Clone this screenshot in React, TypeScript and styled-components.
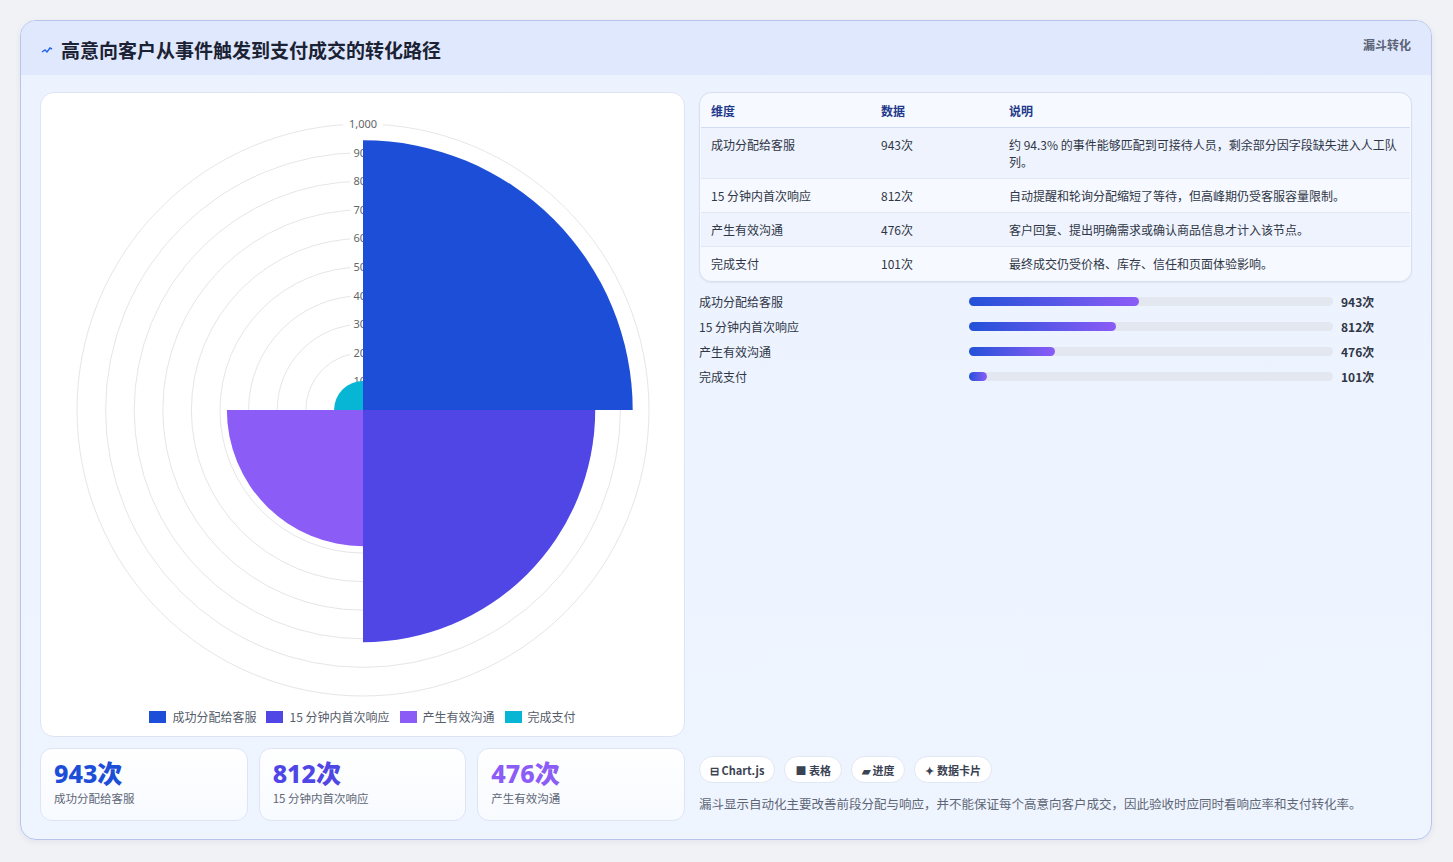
import React from "react";
import styled, { createGlobalStyle } from "styled-components";

const G = createGlobalStyle`
  html,body{margin:0;padding:0;background:#f1f2f5;}
  body{font-family:"Noto Sans CJK SC","Noto Sans",sans-serif;}
`;
const Page = styled.div`padding:20px 21px 22px 20px;`;
const Card = styled.div`
  height:820px;box-sizing:border-box;border:1px solid #b9c5ee;border-radius:16px;overflow:hidden;
  background:linear-gradient(180deg,#ecf2fe,#eef4ff 60%,#eff5ff);display:flex;flex-direction:column;
  box-shadow:0 2px 6px rgba(60,80,160,.08);
`;
const Header = styled.div`
  height:55px;background:#dfe8fd;display:flex;justify-content:space-between;align-items:flex-start;padding:0 20px 0 20px;
`;
const Title = styled.h1`margin:15px 0 0;font-size:19px;font-weight:700;color:#1b2233;display:flex;align-items:center;gap:8px;`;
const Tag = styled.span`margin-top:15px;font-size:12px;font-weight:700;color:#5b6478;`;
const Body = styled.div`flex:1;display:grid;grid-template-columns:645px 1fr;gap:14px;padding:17px 19px 18px 19px;`;
const Left = styled.div`display:flex;flex-direction:column;gap:11px;`;
const ChartBox = styled.div`height:645px;background:#fff;border:1px solid #dde5f5;border-radius:14px;display:flex;flex-direction:column;align-items:center;box-sizing:border-box;`;
const Legend = styled.div`display:flex;gap:10px;font-size:12px;color:#555c6a;margin-top:3px;`;
const LItem = styled.span`display:flex;align-items:center;gap:6px;`;
const Sw = styled.span<{c:string}>`width:17px;height:12px;background:${p=>p.c};`;
const Stats = styled.div`display:grid;grid-template-columns:repeat(3,1fr);gap:11px;`;
const Stat = styled.div`height:73px;box-sizing:border-box;background:linear-gradient(180deg,#fff,#f7faff);border:1px solid #dde5f5;border-radius:12px;padding:9px 13px;`;
const Big = styled.div<{c:string}>`font-family:"Noto Sans","Noto Sans CJK SC",sans-serif;font-size:25px;font-weight:800;color:${p=>p.c};line-height:30px;`;
const Sub = styled.div`font-size:11.5px;color:#5e6676;margin-top:2px;`;
const Right = styled.div`display:flex;flex-direction:column;`;
const Table = styled.table`width:100%;border-collapse:collapse;background:#f6f9ff;border:1px solid #d9e1f2;border-radius:12px;overflow:hidden;border-spacing:0;font-size:12px;color:#2f3646;
  th{font-weight:700;color:#1f3a8a;text-align:left;padding:8px 10px;height:17px;border-bottom:1px solid #d3dbee;}
  td{padding:8px 10px;border-top:1px solid #e1e7f3;vertical-align:top;line-height:17px;}
  tr:nth-child(odd) td{background:#eef3fd;}
`;
const TWrap = styled.div`border:1px solid #d6def0;border-radius:12px;overflow:hidden;box-shadow:0 1px 2px rgba(0,0,0,.05);`;
const Bars = styled.div`display:flex;flex-direction:column;gap:8px;margin-top:11px;`;
const BarRow = styled.div`display:grid;grid-template-columns:270px 372px 1fr;gap:0 0;align-items:center;font-size:12px;color:#2f3646;height:17px;`;
const Track = styled.div`height:9px;border-radius:5px;background:#e2e7f0;margin-right:8px;`;
const Fill = styled.div`height:100%;border-radius:5px;background:linear-gradient(90deg,#2351d8,#8b5cf6);`;
const Val = styled.b`padding-left:0;font-weight:700;`;
const Spacer = styled.div`flex:1;`;
const Chips = styled.div`display:flex;gap:9px;`;
const Chip = styled.span`height:27px;box-sizing:border-box;padding:0 10px;border:1px solid #e1e7f3;border-radius:14px;background:#fff;font-size:11px;font-weight:700;color:#3a4253;display:flex;align-items:center;gap:3px;`;
const Foot = styled.p`margin:11px 0 8px;font-size:12.5px;color:#5e6676;`;

const data=[
 {n:"成功分配给客服",v:943,c:"#1d4ed8",d:"约 94.3% 的事件能够匹配到可接待人员，剩余部分因字段缺失进入人工队列。"},
 {n:"15 分钟内首次响应",v:812,c:"#4f46e5",d:"自动提醒和轮询分配缩短了等待，但高峰期仍受客服容量限制。"},
 {n:"产生有效沟通",v:476,c:"#8b5cf6",d:"客户回复、提出明确需求或确认商品信息才计入该节点。"},
 {n:"完成支付",v:101,c:"#06b6d4",d:"最终成交仍受价格、库存、信任和页面体验影响。"},
];

function Polar(){
  const cx=322,cy=305,R=286;
  const arc=(r:number,a0:number,a1:number)=>{
    const p=(a:number)=>[cx+r*Math.sin(a),cy-r*Math.cos(a)];
    const [x0,y0]=p(a0),[x1,y1]=p(a1);
    return `M${cx} ${cy}L${x0} ${y0}A${r} ${r} 0 0 1 ${x1} ${y1}Z`;
  };
  return <svg width="643" height="600" viewBox="0 0 643 600">
    {Array.from({length:10},(_,i)=><circle key={i} cx={cx} cy={cy} r={R*(i+1)/10} fill="none" stroke="#e6e6e6"/>)}
    {Array.from({length:10},(_,i)=>{const v=(i+1)*100;const y=cy-R*(i+1)/10;const t=v===1000?"1,000":String(v);
      return <g key={i}><rect x={cx-(t.length*3.6)-2} y={y-7} width={t.length*7.2+4} height={13} fill="#fff"/><text x={cx} y={y+4} textAnchor="middle" fontSize="11" fill="#666" fontFamily="Noto Sans">{t}</text></g>})}
    {data.map((d,i)=><path key={i} d={arc(R*d.v/1000,i*Math.PI/2,(i+1)*Math.PI/2)} fill={d.c}/>)}
  </svg>;
}

export default function App(){
  return <Page><G/><Card>
    <Header><Title><svg width="12" height="10" viewBox="0 0 12 10"><path d="M1 7l3-2 2 2 3-4 2 1" fill="none" stroke="#2563eb" strokeWidth="1.4"/></svg>高意向客户从事件触发到支付成交的转化路径</Title><Tag>漏斗转化</Tag></Header>
    <Body>
      <Left>
        <ChartBox><div style={{height:12}}/><Polar/><Legend>{data.map(d=><LItem key={d.n}><Sw c={d.c}/>{d.n}</LItem>)}</Legend></ChartBox>
        <Stats>{data.slice(0,3).map(d=><Stat key={d.n}><Big c={d.c}>{d.v}次</Big><Sub>{d.n}</Sub></Stat>)}</Stats>
      </Left>
      <Right>
        <TWrap><Table><thead><tr><th style={{width:150}}>维度</th><th style={{width:108}}>数据</th><th>说明</th></tr></thead>
          <tbody>{data.map(d=><tr key={d.n}><td>{d.n}</td><td>{d.v}次</td><td>{d.d}</td></tr>)}</tbody></Table></TWrap>
        <Bars>{data.map(d=><BarRow key={d.n}><span>{d.n}</span><Track><Fill style={{width:`${d.v/20.14}%`}}/></Track><Val>{d.v}次</Val></BarRow>)}</Bars>
        <Spacer/>
        <Chips><Chip>⊟ Chart.js</Chip><Chip>■ 表格</Chip><Chip>▰ 进度</Chip><Chip>✦ 数据卡片</Chip></Chips>
        <Foot>漏斗显示自动化主要改善前段分配与响应，并不能保证每个高意向客户成交，因此验收时应同时看响应率和支付转化率。</Foot>
      </Right>
    </Body>
  </Card></Page>;
}
